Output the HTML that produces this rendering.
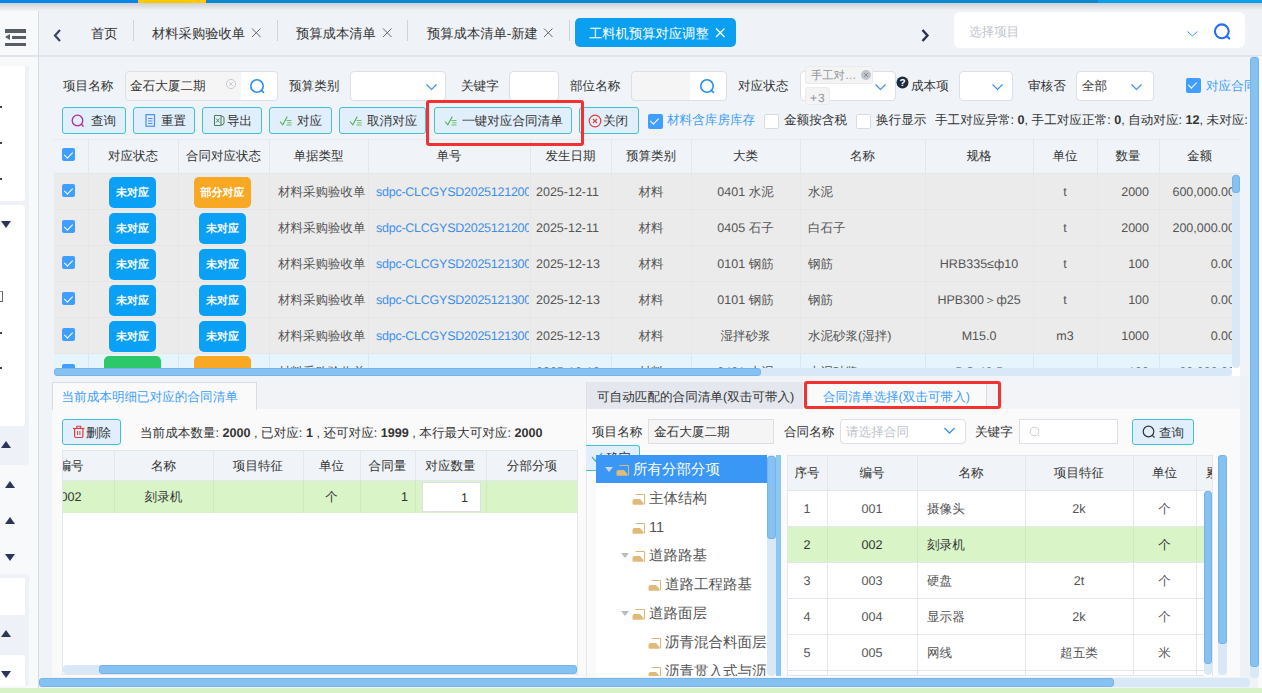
<!DOCTYPE html>
<html><head><meta charset="utf-8">
<style>
*{box-sizing:border-box;margin:0;padding:0}
html,body{width:1262px;height:693px;overflow:hidden;background:#f0f3f8;font-family:"Liberation Sans",sans-serif;font-size:13px;color:#333;text-rendering:geometricPrecision}
.a{position:absolute}
.t{position:absolute;white-space:nowrap;line-height:1}
.sb{position:absolute;background:#86c2f1;border-radius:3px;border:1px solid #76b4e8}
.tr{position:absolute;background:#d9e8f6;border-radius:4px}
.btn{position:absolute;height:27px;top:107px;background:#e1effc;border:1px solid #41c1d3;border-radius:3px;color:#333;white-space:nowrap}
.btn span{position:absolute;top:6px;line-height:1}
.inp{position:absolute;background:#fff;border:1px solid #dcdfe6;border-radius:4px}
.cb{position:absolute;width:15px;height:15px;border-radius:2px;background:#409eff}
.cb:after{content:"";position:absolute;left:4.3px;top:2px;width:3.8px;height:7px;border:solid #fff;border-width:0 1.5px 1.5px 0;transform:rotate(45deg)}
.cbo{position:absolute;width:15px;height:15px;border-radius:2px;background:#fff;border:1px solid #d8dbe0}
.badge{position:absolute;height:31px;border-radius:5px;color:#fff;font-weight:bold;text-align:center}
.badge span{position:absolute;left:0;right:0;top:11px;line-height:1}
.blue{background:#0aa0f5}
.orange{background:#f8a823}
.green{background:#2dc86a}
.vl{position:absolute;width:1px;background:#e3e6ea}
.hl{position:absolute;height:1px;background:#e3e6ea}
</style></head><body>
<div class="a" style="left:0px;top:0px;width:1262px;height:3px;background:#0a88d2"></div>
<div class="a" style="left:0px;top:0px;width:138px;height:3px;background:#0685e8"></div>
<div class="a" style="left:138px;top:0px;width:68px;height:3px;background:#ffc800"></div>
<div class="a" style="left:1098px;top:0px;width:164px;height:3px;background:#0aa0ea"></div>
<div class="a" style="left:0px;top:3px;width:1262px;height:8px;background:linear-gradient(#cfd0d3,#f3f4f6)"></div>
<div class="a" style="left:0px;top:11px;width:1262px;height:44px;background:#eff2f7"></div>
<div class="a" style="left:0px;top:11px;width:38px;height:677px;background:#f8f9fb"></div>
<div class="a" style="left:0px;top:55px;width:1262px;height:2px;background:#e1e5eb"></div>
<div class="a" style="left:38px;top:11px;width:1px;height:677px;background:#d8dce2"></div>
<div class="a" style="left:0px;top:66px;width:29px;height:399px;background:#eef2f8;border-radius:0 0 4px 0"></div>
<div class="a" style="left:0px;top:66px;width:25px;height:135px;background:#fff;border-radius:0 0 4px 0"></div>
<div class="a" style="left:0px;top:205px;width:25px;height:221px;background:#fff;border-radius:0 4px 4px 0"></div>
<div class="a" style="left:1px;top:221px;width:0px;height:0px;border-left:5.5px solid transparent;border-right:5.5px solid transparent;border-top:7px solid #2c3458"></div>
<div class="a" style="left:1px;top:441px;width:0px;height:0px;border-left:5.5px solid transparent;border-right:5.5px solid transparent;border-bottom:7px solid #2c3458"></div>
<div class="a" style="left:5px;top:481px;width:0px;height:0px;border-left:5.5px solid transparent;border-right:5.5px solid transparent;border-bottom:7px solid #2c3458"></div>
<div class="a" style="left:5px;top:517px;width:0px;height:0px;border-left:5.5px solid transparent;border-right:5.5px solid transparent;border-bottom:7px solid #2c3458"></div>
<div class="a" style="left:5px;top:554px;width:0px;height:0px;border-left:5.5px solid transparent;border-right:5.5px solid transparent;border-top:7px solid #2c3458"></div>
<div class="a" style="left:0px;top:574px;width:29px;height:112px;background:#eef2f8;border-radius:0 4px 4px 0"></div>
<div class="a" style="left:0px;top:578px;width:25px;height:37px;background:#fff"></div>
<div class="a" style="left:1px;top:630px;width:0px;height:0px;border-left:5.5px solid transparent;border-right:5.5px solid transparent;border-bottom:7px solid #2c3458"></div>
<div class="a" style="left:0px;top:655px;width:25px;height:31px;background:#fff;border-radius:0 4px 0 0"></div>
<div class="a" style="left:1px;top:671px;width:0px;height:0px;border-left:5.5px solid transparent;border-right:5.5px solid transparent;border-top:7px solid #2c3458"></div>
<div class="a" style="left:0px;top:106px;width:2px;height:2px;background:#444"></div>
<div class="a" style="left:0px;top:142px;width:2px;height:2px;background:#444"></div>
<div class="a" style="left:0px;top:178px;width:2px;height:2px;background:#444"></div>
<div class="a" style="left:0px;top:332px;width:2px;height:2px;background:#444"></div>
<div class="a" style="left:0px;top:367px;width:2px;height:2px;background:#444"></div>
<div class="a" style="left:0px;top:291px;width:3px;height:11px;border-right:1px solid #666;border-top:1px solid #888;border-bottom:1px solid #666"></div>
<div class="a" style="left:5px;top:29.3px;width:21px;height:3.4px;background:#595d64"></div>
<div class="a" style="left:12px;top:36px;width:14px;height:3.4px;background:#595d64"></div>
<div class="a" style="left:5px;top:43px;width:21px;height:3.4px;background:#595d64"></div>
<div class="a" style="left:5px;top:34px;width:0px;height:0px;border-top:3.5px solid transparent;border-bottom:3.5px solid transparent;border-right:5px solid #595d64"></div>
<svg class="a" style="left:50px;top:27px" width="14" height="16"><path d="M10 3 L5 8.5 L10 14" fill="none" stroke="#3a4468" stroke-width="2.2"/></svg>
<svg class="a" style="left:918px;top:27px" width="14" height="16"><path d="M4.5 3 L9.5 8.5 L4.5 14" fill="none" stroke="#2a3050" stroke-width="2.4"/></svg>
<div class="t" style="left:91px;top:27px;font-size:13.3px;color:#333;">首页</div>
<div class="a" style="left:133px;top:20px;width:1px;height:21px;background:#cfd3d9"></div>
<div class="t" style="left:152px;top:27px;font-size:13.3px;color:#333;">材料采购验收单</div>
<svg class="a" style="left:251px;top:27px" width="11" height="11"><path d="M1 1.5 L9.5 10 M9.5 1.5 L1 10" stroke="#666" stroke-width="1"/></svg>
<div class="a" style="left:277px;top:20px;width:1px;height:21px;background:#cfd3d9"></div>
<div class="t" style="left:296px;top:27px;font-size:13.3px;color:#333;">预算成本清单</div>
<svg class="a" style="left:382px;top:27px" width="11" height="11"><path d="M1 1.5 L9.5 10 M9.5 1.5 L1 10" stroke="#666" stroke-width="1"/></svg>
<div class="a" style="left:407px;top:20px;width:1px;height:21px;background:#cfd3d9"></div>
<div class="t" style="left:427px;top:27px;font-size:13.3px;color:#333;">预算成本清单-新建</div>
<svg class="a" style="left:543px;top:27px" width="11" height="11"><path d="M1 1.5 L9.5 10 M9.5 1.5 L1 10" stroke="#666" stroke-width="1"/></svg>
<div class="a" style="left:569px;top:20px;width:1px;height:21px;background:#cfd3d9"></div>
<div class="a" style="left:575px;top:18px;width:161px;height:29px;background:#0a9ff0;border-radius:5px"></div>
<div class="t" style="left:589px;top:27px;font-size:13.3px;color:#fff;">工料机预算对应调整</div>
<svg class="a" style="left:715px;top:27px" width="11" height="11"><path d="M1 1.5 L9.5 10 M9.5 1.5 L1 10" stroke="#fff" stroke-width="1.4"/></svg>
<div class="a" style="left:954px;top:12px;width:291px;height:36px;background:#fff;border-radius:6px"></div>
<div class="t" style="left:969px;top:26px;font-size:12.6px;color:#c0c4cc;">选择项目</div>
<svg class="a" style="left:1186px;top:28.5px" width="14" height="10"><path d="M1.5 2.5 L6.5 7 L11.5 2.5" fill="none" stroke="#3a9af5" stroke-width="1"/></svg>
<svg class="a" style="left:1212px;top:23px" width="22" height="20"><circle cx="9.8" cy="8.3" r="6.9" fill="none" stroke="#2a6cf2" stroke-width="2.1"/><path d="M14.6 13.1 L17.3 15.6" stroke="#2a6cf2" stroke-width="2.1" stroke-linecap="round"/></svg>
<div class="t" style="left:63px;top:79.7px;font-size:12.6px;color:#333;">项目名称</div>
<div class="a" style="left:125px;top:71px;width:153px;height:30px;background:#f5f5f5;border:1px solid #dcdfe6;border-radius:4px"></div>
<div class="a" style="left:241px;top:72px;width:36px;height:28px;background:#fff;border-radius:0 4px 4px 0"></div>
<div class="t" style="left:130px;top:79.7px;font-size:12.6px;color:#333;">金石大厦二期</div>
<svg class="a" style="left:225px;top:78px" width="12" height="12"><circle cx="6" cy="6" r="4.6" fill="none" stroke="#c8cbd0" stroke-width="1"/><path d="M4.2 4.2 L7.8 7.8 M7.8 4.2 L4.2 7.8" stroke="#c8cbd0" stroke-width="1"/></svg>
<svg class="a" style="left:249px;top:78px" width="18" height="18"><circle cx="8" cy="8" r="6.2" fill="none" stroke="#2b8ef0" stroke-width="1.6"/><path d="M12.3 12.3 L15 15" stroke="#2b8ef0" stroke-width="1.6"/></svg>
<div class="t" style="left:289px;top:79.7px;font-size:12.6px;color:#333;">预算类别</div>
<div class="a" style="left:350px;top:71px;width:96px;height:30px;background:#fff;border:1px solid #dcdfe6;border-radius:4px"></div>
<svg class="a" style="left:425px;top:82px" width="14" height="10"><path d="M1.5 2.5 L6.5 7.5 L11.5 2.5" fill="none" stroke="#3d8ef0" stroke-width="1.1"/></svg>
<div class="t" style="left:461px;top:79.7px;font-size:12.6px;color:#333;">关键字</div>
<div class="a" style="left:509px;top:71px;width:50px;height:30px;background:#fff;border:1px solid #dcdfe6;border-radius:4px"></div>
<div class="t" style="left:570px;top:79.7px;font-size:12.6px;color:#333;">部位名称</div>
<div class="a" style="left:631px;top:71px;width:96px;height:30px;background:#f5f5f5;border:1px solid #dcdfe6;border-radius:4px"></div>
<div class="a" style="left:690px;top:72px;width:36px;height:28px;background:#fff;border-radius:0 4px 4px 0"></div>
<svg class="a" style="left:699px;top:78px" width="18" height="18"><circle cx="8" cy="8" r="6.2" fill="none" stroke="#2b8ef0" stroke-width="1.6"/><path d="M12.3 12.3 L15 15" stroke="#2b8ef0" stroke-width="1.6"/></svg>
<div class="t" style="left:738px;top:79.7px;font-size:12.6px;color:#333;">对应状态</div>
<div class="a" style="left:800px;top:71px;width:96px;height:30px;background:#fff;border:1px solid #dcdfe6;border-radius:4px"></div>
<div class="a" style="left:805px;top:66px;width:68px;height:18px;background:#f4f4f5;border:1px solid #ebebeb;border-radius:3px"></div>
<div class="t" style="left:811px;top:70.5px;font-size:11.3px;color:#909399;">手工对…</div>
<svg class="a" style="left:860px;top:69px" width="12" height="12"><circle cx="6" cy="6" r="5" fill="#c0c4cc"/><path d="M4 4 L8 8 M8 4 L4 8" stroke="#8a8d93" stroke-width="1"/></svg>
<div class="a" style="left:805px;top:87px;width:25px;height:18px;background:#f4f4f5;border:1px solid #ebebeb;border-radius:3px"></div>
<div class="t" style="left:810px;top:91.5px;font-size:12px;color:#909399;">+&#8202;3</div>
<svg class="a" style="left:874px;top:82px" width="14" height="10"><path d="M1.5 2.5 L6.5 7.5 L11.5 2.5" fill="none" stroke="#3d8ef0" stroke-width="1.1"/></svg>
<svg class="a" style="left:896px;top:76px" width="13" height="13"><circle cx="6.5" cy="6.5" r="6" fill="#1d2b3a"/><text x="6.5" y="10.3" font-size="10" font-weight="bold" fill="#fff" text-anchor="middle" font-family="Liberation Sans">?</text></svg>
<div class="t" style="left:911px;top:79.7px;font-size:12.6px;color:#333;">成本项</div>
<div class="a" style="left:959px;top:71px;width:54px;height:30px;background:#fff;border:1px solid #dcdfe6;border-radius:4px"></div>
<svg class="a" style="left:991px;top:82px" width="14" height="10"><path d="M1.5 2.5 L6.5 7.5 L11.5 2.5" fill="none" stroke="#3d8ef0" stroke-width="1.1"/></svg>
<div class="t" style="left:1028px;top:79.7px;font-size:12.6px;color:#333;">审核否</div>
<div class="a" style="left:1076px;top:71px;width:78px;height:30px;background:#fff;border:1px solid #dcdfe6;border-radius:4px"></div>
<div class="t" style="left:1082px;top:79.7px;font-size:12.6px;color:#333;">全部</div>
<svg class="a" style="left:1130px;top:82px" width="14" height="10"><path d="M1.5 2.5 L6.5 7.5 L11.5 2.5" fill="none" stroke="#3d8ef0" stroke-width="1.1"/></svg>
<div class="cb" style="left:1186px;top:78px"></div>
<div class="t" style="left:1206px;top:79.7px;font-size:12.6px;color:#409eff;">对应合同</div>
<div class="btn" style="left:62px;top:107px;width:64px;height:27px"><svg style="position:absolute;left:8px;top:6px" width="14" height="15"><circle cx="6.5" cy="6.5" r="5.3" fill="none" stroke="#b02a9a" stroke-width="1.3"/><path d="M10.3 10.3 L12.5 12.5" stroke="#b02a9a" stroke-width="1.3"/></svg><span style="left:28px;font-size:12.6px;top:6.7px">查询</span></div>
<div class="btn" style="left:133px;top:107px;width:62px;height:27px"><svg style="position:absolute;left:11px;top:6px" width="12" height="14"><rect x="1" y="0.7" width="8.5" height="11.5" fill="none" stroke="#4a8ef0" stroke-width="1.2"/><path d="M3 4.5 H7.5 M3 7 H7.5 M3 9.5 H7.5" stroke="#4a8ef0" stroke-width="1"/></svg><span style="left:27px;font-size:12.6px;top:6.7px">重置</span></div>
<div class="btn" style="left:202px;top:107px;width:60px;height:27px"><svg style="position:absolute;left:10px;top:6px" width="13" height="14"><path d="M1.5 1.5 H8 V11.5 H1.5 Z" fill="none" stroke="#4a7f50" stroke-width="1"/><path d="M8 2 Q11 2 11 4 V9 Q11 11 8 11" fill="none" stroke="#4a7f50" stroke-width="1"/><path d="M3 4.5 L6.5 8.5 M6.5 4.5 L3 8.5" stroke="#4a7f50" stroke-width="0.9"/></svg><span style="left:24px;font-size:12.6px;top:6.7px">导出</span></div>
<div class="btn" style="left:269px;top:107px;width:63px;height:27px"><svg style="position:absolute;left:9px;top:7px" width="15" height="12"><path d="M1 6.5 L3.8 9.8 L8.3 1.5" fill="none" stroke="#4fb04a" stroke-width="1.1"/><path d="M7.5 5.5 H12.5 M8.3 7.8 H12.5 M7.5 10 H12.5" stroke="#62b85a" stroke-width="0.9"/></svg><span style="left:27px;font-size:12.6px;top:6.7px">对应</span></div>
<div class="btn" style="left:339px;top:107px;width:87px;height:27px"><svg style="position:absolute;left:9px;top:7px" width="15" height="12"><path d="M1 6.5 L3.8 9.8 L8.3 1.5" fill="none" stroke="#4fb04a" stroke-width="1.1"/><path d="M7.5 5.5 H12.5 M8.3 7.8 H12.5 M7.5 10 H12.5" stroke="#62b85a" stroke-width="0.9"/></svg><span style="left:27px;font-size:12.6px;top:6.7px">取消对应</span></div>
<div class="btn" style="left:434px;top:107px;width:138px;height:27px"><svg style="position:absolute;left:9px;top:7px" width="15" height="12"><path d="M1 6.5 L3.8 9.8 L8.3 1.5" fill="none" stroke="#4fb04a" stroke-width="1.1"/><path d="M7.5 5.5 H12.5 M8.3 7.8 H12.5 M7.5 10 H12.5" stroke="#62b85a" stroke-width="0.9"/></svg><span style="left:27px;font-size:12.6px;top:6.7px">一键对应合同清单</span></div>
<div class="btn" style="left:579px;top:107px;width:60px;height:27px"><svg style="position:absolute;left:8px;top:6px" width="14" height="14"><circle cx="7" cy="7" r="5.8" fill="none" stroke="#e23c3c" stroke-width="1.2"/><path d="M5 5 L9 9 M9 5 L5 9" stroke="#e23c3c" stroke-width="1.1"/></svg><span style="left:23px;font-size:12.6px;top:6.7px">关闭</span></div>
<div class="cb" style="left:648px;top:114px"></div>
<div class="t" style="left:667px;top:114.3px;font-size:12.6px;color:#409eff;">材料含库房库存</div>
<div class="cbo" style="left:764px;top:114px"></div>
<div class="t" style="left:784px;top:114.3px;font-size:12.6px;color:#333;">金额按含税</div>
<div class="cbo" style="left:856px;top:114px"></div>
<div class="t" style="left:876px;top:114.3px;font-size:12.6px;color:#333;">换行显示</div>
<div class="t" style="left:935px;top:114.3px;font-size:12.6px;color:#333;width:314px;overflow:hidden">手工对应异常: <b>0</b>, 手工对应正常: <b>0</b>, 自动对应: <b>12</b>, 未对应: <b>9</b></div>
<div class="a" style="left:54px;top:139px;width:1186px;height:229px;background:#fff;border-top:1px solid #e6e9ee;overflow:hidden">
<div class="a" style="left:0px;top:0px;width:1186px;height:34px;background:#f0f3f8;border-bottom:1px solid #e3e6ea"></div>
<div class="a" style="left:34px;top:0px;width:1px;height:34px;background:#e3e6ea"></div>
<div class="a" style="left:124px;top:0px;width:1px;height:34px;background:#e3e6ea"></div>
<div class="a" style="left:215px;top:0px;width:1px;height:34px;background:#e3e6ea"></div>
<div class="a" style="left:314px;top:0px;width:1px;height:34px;background:#e3e6ea"></div>
<div class="a" style="left:476px;top:0px;width:1px;height:34px;background:#e3e6ea"></div>
<div class="a" style="left:557px;top:0px;width:1px;height:34px;background:#e3e6ea"></div>
<div class="a" style="left:637px;top:0px;width:1px;height:34px;background:#e3e6ea"></div>
<div class="a" style="left:746px;top:0px;width:1px;height:34px;background:#e3e6ea"></div>
<div class="a" style="left:871px;top:0px;width:1px;height:34px;background:#e3e6ea"></div>
<div class="a" style="left:979px;top:0px;width:1px;height:34px;background:#e3e6ea"></div>
<div class="a" style="left:1043px;top:0px;width:1px;height:34px;background:#e3e6ea"></div>
<div class="a" style="left:1105px;top:0px;width:1px;height:34px;background:#e3e6ea"></div>
<div class="cb" style="left:8px;top:8px;width:13px;height:13px"></div>
<div class="t" style="left:34px;width:90px;top:10.3px;text-align:center;font-size:12.5px;color:#333;">对应状态</div>
<div class="t" style="left:124px;width:91px;top:10.3px;text-align:center;font-size:12.5px;color:#333;">合同对应状态</div>
<div class="t" style="left:215px;width:99px;top:10.3px;text-align:center;font-size:12.5px;color:#333;">单据类型</div>
<div class="t" style="left:314px;width:162px;top:10.3px;text-align:center;font-size:12.5px;color:#333;">单号</div>
<div class="t" style="left:476px;width:81px;top:10.3px;text-align:center;font-size:12.5px;color:#333;">发生日期</div>
<div class="t" style="left:557px;width:80px;top:10.3px;text-align:center;font-size:12.5px;color:#333;">预算类别</div>
<div class="t" style="left:637px;width:109px;top:10.3px;text-align:center;font-size:12.5px;color:#333;">大类</div>
<div class="t" style="left:746px;width:125px;top:10.3px;text-align:center;font-size:12.5px;color:#333;">名称</div>
<div class="t" style="left:871px;width:108px;top:10.3px;text-align:center;font-size:12.5px;color:#333;">规格</div>
<div class="t" style="left:979px;width:64px;top:10.3px;text-align:center;font-size:12.5px;color:#333;">单位</div>
<div class="t" style="left:1043px;width:62px;top:10.3px;text-align:center;font-size:12.5px;color:#333;">数量</div>
<div class="t" style="left:1105px;width:81px;top:10.3px;text-align:center;font-size:12.5px;color:#333;">金额</div>
<div class="a" style="left:0px;top:34px;width:1186px;height:36px;background:#ebebeb"></div>
<div class="a" style="left:0px;top:69px;width:1186px;height:1px;background:#e6e6e6"></div>
<div class="a" style="left:34px;top:34px;width:1px;height:36px;background:#e7e7e7"></div>
<div class="a" style="left:124px;top:34px;width:1px;height:36px;background:#e7e7e7"></div>
<div class="a" style="left:215px;top:34px;width:1px;height:36px;background:#e7e7e7"></div>
<div class="a" style="left:314px;top:34px;width:1px;height:36px;background:#e7e7e7"></div>
<div class="a" style="left:476px;top:34px;width:1px;height:36px;background:#e7e7e7"></div>
<div class="a" style="left:557px;top:34px;width:1px;height:36px;background:#e7e7e7"></div>
<div class="a" style="left:637px;top:34px;width:1px;height:36px;background:#e7e7e7"></div>
<div class="a" style="left:746px;top:34px;width:1px;height:36px;background:#e7e7e7"></div>
<div class="a" style="left:871px;top:34px;width:1px;height:36px;background:#e7e7e7"></div>
<div class="a" style="left:979px;top:34px;width:1px;height:36px;background:#e7e7e7"></div>
<div class="a" style="left:1043px;top:34px;width:1px;height:36px;background:#e7e7e7"></div>
<div class="a" style="left:1105px;top:34px;width:1px;height:36px;background:#e7e7e7"></div>
<div class="cb" style="left:8px;top:44px;width:13px;height:13px"></div>
<div class="badge blue" style="left:55px;top:37px;width:47px"><span style="font-size:11px">未对应</span></div>
<div class="badge orange" style="left:140px;top:37px;width:57px"><span style="font-size:11px">部分对应</span></div>
<div class="t" style="left:224px;top:46.3px;font-size:12.5px;color:#555;">材料采购验收单</div>
<div class="t" style="left:322px;top:46.3px;font-size:12.5px;color:#3f8ee8;width:153px;overflow:hidden;letter-spacing:-0.25px">sdpc-CLCGYSD2025121200</div>
<div class="t" style="left:482px;top:46.3px;font-size:12.5px;color:#555;">2025-12-11</div>
<div class="t" style="left:557px;width:80px;top:46.3px;text-align:center;font-size:12.5px;color:#555;">材料</div>
<div class="t" style="left:637px;width:109px;top:46.3px;text-align:center;font-size:12.5px;color:#555;">0401 水泥</div>
<div class="t" style="left:754px;top:46.3px;font-size:12.5px;color:#555;">水泥</div>
<div class="t" style="left:871px;width:108px;top:46.3px;text-align:center;font-size:12.5px;color:#555;"></div>
<div class="t" style="left:979px;width:64px;top:46.3px;text-align:center;font-size:12.5px;color:#555;">t</div>
<div class="t" style="left:1043px;width:52px;top:46.3px;text-align:right;font-size:12.5px;color:#555;">2000</div>
<div class="t" style="left:1101px;width:80px;top:46.3px;text-align:right;font-size:12.5px;color:#555;">600,000.00</div>
<div class="a" style="left:0px;top:70px;width:1186px;height:36px;background:#ebebeb"></div>
<div class="a" style="left:0px;top:105px;width:1186px;height:1px;background:#e6e6e6"></div>
<div class="a" style="left:34px;top:70px;width:1px;height:36px;background:#e7e7e7"></div>
<div class="a" style="left:124px;top:70px;width:1px;height:36px;background:#e7e7e7"></div>
<div class="a" style="left:215px;top:70px;width:1px;height:36px;background:#e7e7e7"></div>
<div class="a" style="left:314px;top:70px;width:1px;height:36px;background:#e7e7e7"></div>
<div class="a" style="left:476px;top:70px;width:1px;height:36px;background:#e7e7e7"></div>
<div class="a" style="left:557px;top:70px;width:1px;height:36px;background:#e7e7e7"></div>
<div class="a" style="left:637px;top:70px;width:1px;height:36px;background:#e7e7e7"></div>
<div class="a" style="left:746px;top:70px;width:1px;height:36px;background:#e7e7e7"></div>
<div class="a" style="left:871px;top:70px;width:1px;height:36px;background:#e7e7e7"></div>
<div class="a" style="left:979px;top:70px;width:1px;height:36px;background:#e7e7e7"></div>
<div class="a" style="left:1043px;top:70px;width:1px;height:36px;background:#e7e7e7"></div>
<div class="a" style="left:1105px;top:70px;width:1px;height:36px;background:#e7e7e7"></div>
<div class="cb" style="left:8px;top:80px;width:13px;height:13px"></div>
<div class="badge blue" style="left:55px;top:73px;width:47px"><span style="font-size:11px">未对应</span></div>
<div class="badge blue" style="left:145px;top:73px;width:47px"><span style="font-size:11px">未对应</span></div>
<div class="t" style="left:224px;top:82.3px;font-size:12.5px;color:#555;">材料采购验收单</div>
<div class="t" style="left:322px;top:82.3px;font-size:12.5px;color:#3f8ee8;width:153px;overflow:hidden;letter-spacing:-0.25px">sdpc-CLCGYSD2025121200</div>
<div class="t" style="left:482px;top:82.3px;font-size:12.5px;color:#555;">2025-12-11</div>
<div class="t" style="left:557px;width:80px;top:82.3px;text-align:center;font-size:12.5px;color:#555;">材料</div>
<div class="t" style="left:637px;width:109px;top:82.3px;text-align:center;font-size:12.5px;color:#555;">0405 石子</div>
<div class="t" style="left:754px;top:82.3px;font-size:12.5px;color:#555;">白石子</div>
<div class="t" style="left:871px;width:108px;top:82.3px;text-align:center;font-size:12.5px;color:#555;"></div>
<div class="t" style="left:979px;width:64px;top:82.3px;text-align:center;font-size:12.5px;color:#555;">t</div>
<div class="t" style="left:1043px;width:52px;top:82.3px;text-align:right;font-size:12.5px;color:#555;">2000</div>
<div class="t" style="left:1101px;width:80px;top:82.3px;text-align:right;font-size:12.5px;color:#555;">200,000.00</div>
<div class="a" style="left:0px;top:106px;width:1186px;height:36px;background:#ebebeb"></div>
<div class="a" style="left:0px;top:141px;width:1186px;height:1px;background:#e6e6e6"></div>
<div class="a" style="left:34px;top:106px;width:1px;height:36px;background:#e7e7e7"></div>
<div class="a" style="left:124px;top:106px;width:1px;height:36px;background:#e7e7e7"></div>
<div class="a" style="left:215px;top:106px;width:1px;height:36px;background:#e7e7e7"></div>
<div class="a" style="left:314px;top:106px;width:1px;height:36px;background:#e7e7e7"></div>
<div class="a" style="left:476px;top:106px;width:1px;height:36px;background:#e7e7e7"></div>
<div class="a" style="left:557px;top:106px;width:1px;height:36px;background:#e7e7e7"></div>
<div class="a" style="left:637px;top:106px;width:1px;height:36px;background:#e7e7e7"></div>
<div class="a" style="left:746px;top:106px;width:1px;height:36px;background:#e7e7e7"></div>
<div class="a" style="left:871px;top:106px;width:1px;height:36px;background:#e7e7e7"></div>
<div class="a" style="left:979px;top:106px;width:1px;height:36px;background:#e7e7e7"></div>
<div class="a" style="left:1043px;top:106px;width:1px;height:36px;background:#e7e7e7"></div>
<div class="a" style="left:1105px;top:106px;width:1px;height:36px;background:#e7e7e7"></div>
<div class="cb" style="left:8px;top:116px;width:13px;height:13px"></div>
<div class="badge blue" style="left:55px;top:109px;width:47px"><span style="font-size:11px">未对应</span></div>
<div class="badge blue" style="left:145px;top:109px;width:47px"><span style="font-size:11px">未对应</span></div>
<div class="t" style="left:224px;top:118.3px;font-size:12.5px;color:#555;">材料采购验收单</div>
<div class="t" style="left:322px;top:118.3px;font-size:12.5px;color:#3f8ee8;width:153px;overflow:hidden;letter-spacing:-0.25px">sdpc-CLCGYSD2025121300</div>
<div class="t" style="left:482px;top:118.3px;font-size:12.5px;color:#555;">2025-12-13</div>
<div class="t" style="left:557px;width:80px;top:118.3px;text-align:center;font-size:12.5px;color:#555;">材料</div>
<div class="t" style="left:637px;width:109px;top:118.3px;text-align:center;font-size:12.5px;color:#555;">0101 钢筋</div>
<div class="t" style="left:754px;top:118.3px;font-size:12.5px;color:#555;">钢筋</div>
<div class="t" style="left:871px;width:108px;top:118.3px;text-align:center;font-size:12.5px;color:#555;">HRB335≤ф10</div>
<div class="t" style="left:979px;width:64px;top:118.3px;text-align:center;font-size:12.5px;color:#555;">t</div>
<div class="t" style="left:1043px;width:52px;top:118.3px;text-align:right;font-size:12.5px;color:#555;">100</div>
<div class="t" style="left:1101px;width:80px;top:118.3px;text-align:right;font-size:12.5px;color:#555;">0.00</div>
<div class="a" style="left:0px;top:142px;width:1186px;height:36px;background:#ebebeb"></div>
<div class="a" style="left:0px;top:177px;width:1186px;height:1px;background:#e6e6e6"></div>
<div class="a" style="left:34px;top:142px;width:1px;height:36px;background:#e7e7e7"></div>
<div class="a" style="left:124px;top:142px;width:1px;height:36px;background:#e7e7e7"></div>
<div class="a" style="left:215px;top:142px;width:1px;height:36px;background:#e7e7e7"></div>
<div class="a" style="left:314px;top:142px;width:1px;height:36px;background:#e7e7e7"></div>
<div class="a" style="left:476px;top:142px;width:1px;height:36px;background:#e7e7e7"></div>
<div class="a" style="left:557px;top:142px;width:1px;height:36px;background:#e7e7e7"></div>
<div class="a" style="left:637px;top:142px;width:1px;height:36px;background:#e7e7e7"></div>
<div class="a" style="left:746px;top:142px;width:1px;height:36px;background:#e7e7e7"></div>
<div class="a" style="left:871px;top:142px;width:1px;height:36px;background:#e7e7e7"></div>
<div class="a" style="left:979px;top:142px;width:1px;height:36px;background:#e7e7e7"></div>
<div class="a" style="left:1043px;top:142px;width:1px;height:36px;background:#e7e7e7"></div>
<div class="a" style="left:1105px;top:142px;width:1px;height:36px;background:#e7e7e7"></div>
<div class="cb" style="left:8px;top:152px;width:13px;height:13px"></div>
<div class="badge blue" style="left:55px;top:145px;width:47px"><span style="font-size:11px">未对应</span></div>
<div class="badge blue" style="left:145px;top:145px;width:47px"><span style="font-size:11px">未对应</span></div>
<div class="t" style="left:224px;top:154.3px;font-size:12.5px;color:#555;">材料采购验收单</div>
<div class="t" style="left:322px;top:154.3px;font-size:12.5px;color:#3f8ee8;width:153px;overflow:hidden;letter-spacing:-0.25px">sdpc-CLCGYSD2025121300</div>
<div class="t" style="left:482px;top:154.3px;font-size:12.5px;color:#555;">2025-12-13</div>
<div class="t" style="left:557px;width:80px;top:154.3px;text-align:center;font-size:12.5px;color:#555;">材料</div>
<div class="t" style="left:637px;width:109px;top:154.3px;text-align:center;font-size:12.5px;color:#555;">0101 钢筋</div>
<div class="t" style="left:754px;top:154.3px;font-size:12.5px;color:#555;">钢筋</div>
<div class="t" style="left:871px;width:108px;top:154.3px;text-align:center;font-size:12.5px;color:#555;">HPB300＞ф25</div>
<div class="t" style="left:979px;width:64px;top:154.3px;text-align:center;font-size:12.5px;color:#555;">t</div>
<div class="t" style="left:1043px;width:52px;top:154.3px;text-align:right;font-size:12.5px;color:#555;">100</div>
<div class="t" style="left:1101px;width:80px;top:154.3px;text-align:right;font-size:12.5px;color:#555;">0.00</div>
<div class="a" style="left:0px;top:178px;width:1186px;height:36px;background:#ebebeb"></div>
<div class="a" style="left:0px;top:213px;width:1186px;height:1px;background:#e6e6e6"></div>
<div class="a" style="left:34px;top:178px;width:1px;height:36px;background:#e7e7e7"></div>
<div class="a" style="left:124px;top:178px;width:1px;height:36px;background:#e7e7e7"></div>
<div class="a" style="left:215px;top:178px;width:1px;height:36px;background:#e7e7e7"></div>
<div class="a" style="left:314px;top:178px;width:1px;height:36px;background:#e7e7e7"></div>
<div class="a" style="left:476px;top:178px;width:1px;height:36px;background:#e7e7e7"></div>
<div class="a" style="left:557px;top:178px;width:1px;height:36px;background:#e7e7e7"></div>
<div class="a" style="left:637px;top:178px;width:1px;height:36px;background:#e7e7e7"></div>
<div class="a" style="left:746px;top:178px;width:1px;height:36px;background:#e7e7e7"></div>
<div class="a" style="left:871px;top:178px;width:1px;height:36px;background:#e7e7e7"></div>
<div class="a" style="left:979px;top:178px;width:1px;height:36px;background:#e7e7e7"></div>
<div class="a" style="left:1043px;top:178px;width:1px;height:36px;background:#e7e7e7"></div>
<div class="a" style="left:1105px;top:178px;width:1px;height:36px;background:#e7e7e7"></div>
<div class="cb" style="left:8px;top:188px;width:13px;height:13px"></div>
<div class="badge blue" style="left:55px;top:181px;width:47px"><span style="font-size:11px">未对应</span></div>
<div class="badge blue" style="left:145px;top:181px;width:47px"><span style="font-size:11px">未对应</span></div>
<div class="t" style="left:224px;top:190.3px;font-size:12.5px;color:#555;">材料采购验收单</div>
<div class="t" style="left:322px;top:190.3px;font-size:12.5px;color:#3f8ee8;width:153px;overflow:hidden;letter-spacing:-0.25px">sdpc-CLCGYSD2025121300</div>
<div class="t" style="left:482px;top:190.3px;font-size:12.5px;color:#555;">2025-12-13</div>
<div class="t" style="left:557px;width:80px;top:190.3px;text-align:center;font-size:12.5px;color:#555;">材料</div>
<div class="t" style="left:637px;width:109px;top:190.3px;text-align:center;font-size:12.5px;color:#555;">湿拌砂浆</div>
<div class="t" style="left:754px;top:190.3px;font-size:12.5px;color:#555;">水泥砂浆(湿拌)</div>
<div class="t" style="left:871px;width:108px;top:190.3px;text-align:center;font-size:12.5px;color:#555;">M15.0</div>
<div class="t" style="left:979px;width:64px;top:190.3px;text-align:center;font-size:12.5px;color:#555;">m3</div>
<div class="t" style="left:1043px;width:52px;top:190.3px;text-align:right;font-size:12.5px;color:#555;">1000</div>
<div class="t" style="left:1101px;width:80px;top:190.3px;text-align:right;font-size:12.5px;color:#555;">0.00</div>
<div class="a" style="left:0px;top:214px;width:1186px;height:36px;background:#e6f5fd"></div>
<div class="a" style="left:34px;top:214px;width:1px;height:36px;background:#dde8ee"></div>
<div class="a" style="left:124px;top:214px;width:1px;height:36px;background:#dde8ee"></div>
<div class="a" style="left:215px;top:214px;width:1px;height:36px;background:#dde8ee"></div>
<div class="a" style="left:314px;top:214px;width:1px;height:36px;background:#dde8ee"></div>
<div class="a" style="left:476px;top:214px;width:1px;height:36px;background:#dde8ee"></div>
<div class="a" style="left:557px;top:214px;width:1px;height:36px;background:#dde8ee"></div>
<div class="a" style="left:637px;top:214px;width:1px;height:36px;background:#dde8ee"></div>
<div class="a" style="left:746px;top:214px;width:1px;height:36px;background:#dde8ee"></div>
<div class="a" style="left:871px;top:214px;width:1px;height:36px;background:#dde8ee"></div>
<div class="a" style="left:979px;top:214px;width:1px;height:36px;background:#dde8ee"></div>
<div class="a" style="left:1043px;top:214px;width:1px;height:36px;background:#dde8ee"></div>
<div class="a" style="left:1105px;top:214px;width:1px;height:36px;background:#dde8ee"></div>
<div class="cb" style="left:8px;top:224px;width:13px;height:13px"></div>
<div class="badge green" style="left:50px;top:216px;width:57px"><span style="font-size:11px"></span></div>
<div class="badge orange" style="left:140px;top:216px;width:57px"><span style="font-size:11px"></span></div>
<div class="t" style="left:224px;top:226.3px;font-size:12.5px;color:#555;">材料采购验收单</div>
<div class="t" style="left:482px;top:226.3px;font-size:12.5px;color:#555;">2025-12-13</div>
<div class="t" style="left:557px;width:80px;top:226.3px;text-align:center;font-size:12.5px;color:#555;">材料</div>
<div class="t" style="left:637px;width:109px;top:226.3px;text-align:center;font-size:12.5px;color:#555;">0401 水泥</div>
<div class="t" style="left:754px;top:226.3px;font-size:12.5px;color:#555;">水泥砂浆</div>
<div class="t" style="left:871px;width:108px;top:226.3px;text-align:center;font-size:12.5px;color:#555;">P.O 42.5</div>
<div class="t" style="left:979px;width:64px;top:226.3px;text-align:center;font-size:12.5px;color:#555;">t</div>
<div class="t" style="left:1043px;width:52px;top:226.3px;text-align:right;font-size:12.5px;color:#555;">100</div>
<div class="t" style="left:1101px;width:80px;top:226.3px;text-align:right;font-size:12.5px;color:#555;">30,000.00</div>
</div>
<div class="a" style="left:1232px;top:174px;width:8px;height:202px;background:#fff"></div>
<div class="tr" style="left:1232px;top:174px;width:8px;height:194px"></div>
<div class="sb" style="left:1232px;top:175px;width:8px;height:18px"></div>
<div class="tr" style="left:54px;top:368px;width:1178px;height:8px"></div>
<div class="sb" style="left:54px;top:368px;width:707px;height:8px"></div>
<div class="a" style="left:426px;top:100px;width:158px;height:46px;border:3px solid #f33131;border-radius:3px"></div>
<div class="a" style="left:52px;top:382px;width:534px;height:28px;background:#f1f3f7;border-bottom:1px solid #dadee4"></div>
<div class="a" style="left:52px;top:409px;width:534px;height:268px;background:#fafafa"></div>
<div class="a" style="left:52px;top:382px;width:205px;height:28px;background:#fafafa;border:1px solid #dadee4;border-bottom:none"></div>
<div class="t" style="left:61.5px;top:391px;font-size:12.6px;color:#409eff;">当前成本明细已对应的合同清单</div>
<div class="btn" style="left:62px;top:419px;width:59px;height:26px"><svg style="position:absolute;left:9px;top:5px" width="14" height="15"><path d="M1 3.5 H12.5" stroke="#e23c3c" stroke-width="1.2"/><path d="M4.8 3.5 V1.3 H8.7 V3.5" fill="none" stroke="#e23c3c" stroke-width="1.1"/><path d="M2.6 3.5 V11.3 Q2.6 12.5 3.8 12.5 H9.7 Q10.9 12.5 10.9 11.3 V3.5" fill="none" stroke="#e23c3c" stroke-width="1.2"/><path d="M5.6 6 V10 M7.9 6 V10" stroke="#e23c3c" stroke-width="1"/></svg><span style="left:23px;top:6.5px;font-size:12.6px">删除</span></div>
<div class="t" style="left:140px;top:426.5px;font-size:12.6px;color:#333;">当前成本数量: <b>2000</b> , 已对应: <b>1</b> , 还可对应: <b>1999</b> , 本行最大可对应: <b>2000</b></div>
<div class="a" style="left:62px;top:450px;width:516px;height:225px;background:#fff;border:1px solid #e3e6ea;overflow:hidden">
<div class="a" style="left:0px;top:0px;width:516px;height:30px;background:#f0f3f8;border-bottom:1px solid #e3e6ea"></div>
<div class="a" style="left:51px;top:0px;width:1px;height:30px;background:#e3e6ea"></div>
<div class="a" style="left:150px;top:0px;width:1px;height:30px;background:#e3e6ea"></div>
<div class="a" style="left:240px;top:0px;width:1px;height:30px;background:#e3e6ea"></div>
<div class="a" style="left:297px;top:0px;width:1px;height:30px;background:#e3e6ea"></div>
<div class="a" style="left:352px;top:0px;width:1px;height:30px;background:#e3e6ea"></div>
<div class="a" style="left:423px;top:0px;width:1px;height:30px;background:#e3e6ea"></div>
<div class="t" style="left:-24px;width:64px;top:9px;text-align:center;font-size:12.6px;color:#333;">编号</div>
<div class="t" style="left:51px;width:99px;top:9px;text-align:center;font-size:12.6px;color:#333;">名称</div>
<div class="t" style="left:150px;width:90px;top:9px;text-align:center;font-size:12.6px;color:#333;">项目特征</div>
<div class="t" style="left:240px;width:57px;top:9px;text-align:center;font-size:12.6px;color:#333;">单位</div>
<div class="t" style="left:297px;width:55px;top:9px;text-align:center;font-size:12.6px;color:#333;">合同量</div>
<div class="t" style="left:352px;width:71px;top:9px;text-align:center;font-size:12.6px;color:#333;">对应数量</div>
<div class="t" style="left:423px;width:92px;top:9px;text-align:center;font-size:12.6px;color:#333;">分部分项</div>
<div class="a" style="left:0px;top:30px;width:516px;height:32px;background:#d9f5c8"></div>
<div class="a" style="left:51px;top:30px;width:1px;height:32px;background:#cfe8c0"></div>
<div class="a" style="left:150px;top:30px;width:1px;height:32px;background:#cfe8c0"></div>
<div class="a" style="left:240px;top:30px;width:1px;height:32px;background:#cfe8c0"></div>
<div class="a" style="left:297px;top:30px;width:1px;height:32px;background:#cfe8c0"></div>
<div class="a" style="left:352px;top:30px;width:1px;height:32px;background:#cfe8c0"></div>
<div class="a" style="left:423px;top:30px;width:1px;height:32px;background:#cfe8c0"></div>
<div class="t" style="left:-24px;width:64px;top:40px;text-align:center;font-size:12.6px;color:#333;">002</div>
<div class="t" style="left:51px;width:99px;top:40px;text-align:center;font-size:12.6px;color:#333;">刻录机</div>
<div class="t" style="left:240px;width:57px;top:40px;text-align:center;font-size:12.6px;color:#333;">个</div>
<div class="t" style="left:297px;width:48px;top:40px;text-align:right;font-size:12.6px;color:#333;">1</div>
<div class="a" style="left:359px;top:31px;width:59px;height:30px;background:#fff;border:1px solid #dcdfe6"></div>
<div class="t" style="left:359px;width:46px;top:41px;text-align:right;font-size:12.6px;color:#333;">1</div>
</div>
<div class="tr" style="left:63px;top:665px;width:514px;height:9px"></div>
<div class="sb" style="left:99px;top:665px;width:478px;height:9px"></div>
<div class="a" style="left:586px;top:382px;width:654px;height:27px;background:#f3f4f7"></div>
<div class="a" style="left:586px;top:409px;width:654px;height:268px;background:#fafafa;border-left:1px solid #e6e8eb"></div>
<div class="a" style="left:586px;top:382px;width:217px;height:27px;background:#e4e8ee;border-left:1px solid #dde1e6"></div>
<div class="t" style="left:597px;top:390.5px;font-size:12.6px;color:#333;">可自动匹配的合同清单(双击可带入)</div>
<div class="a" style="left:803px;top:382px;width:184px;height:27px;background:#fafafa;border-right:1px solid #d9dde2"></div>
<div class="t" style="left:823px;top:390.5px;font-size:12.6px;color:#409eff;">合同清单选择(双击可带入)</div>
<div class="a" style="left:804px;top:381px;width:197px;height:28px;border:3px solid #f33131;border-radius:3px"></div>
<div class="t" style="left:592px;top:425.5px;font-size:12.6px;color:#333;">项目名称</div>
<div class="a" style="left:648px;top:419px;width:126px;height:25px;background:#f5f5f5;border:1px solid #dcdfe6"></div>
<div class="t" style="left:654px;top:425.5px;font-size:12.6px;color:#333;">金石大厦二期</div>
<div class="t" style="left:784px;top:425.5px;font-size:12.6px;color:#333;">合同名称</div>
<div class="a" style="left:840px;top:419px;width:126px;height:25px;background:#fff;border:1px solid #dcdfe6;border-radius:4px"></div>
<div class="t" style="left:846px;top:425.5px;font-size:12.6px;color:#c0c4cc;">请选择合同</div>
<svg class="a" style="left:943px;top:426px" width="14" height="10"><path d="M1.5 2 L6.5 7 L11.5 2" fill="none" stroke="#3d8ef0" stroke-width="1.3"/></svg>
<div class="t" style="left:975px;top:425.5px;font-size:12.6px;color:#333;">关键字</div>
<div class="a" style="left:1019px;top:419px;width:99px;height:25px;background:#fff;border:1px solid #dcdfe6"></div>
<svg class="a" style="left:1029px;top:426px" width="12" height="12"><circle cx="5.5" cy="5.5" r="4.3" fill="none" stroke="#c8ccd2" stroke-width="1"/><path d="M8.5 8.5 L10.5 10.5" stroke="#c8ccd2" stroke-width="1"/></svg>
<div class="btn" style="left:1132px;top:419px;width:62px;height:26px"><svg style="position:absolute;left:9px;top:5px" width="14" height="15"><circle cx="6.5" cy="6.5" r="5.3" fill="none" stroke="#333" stroke-width="1.2"/><path d="M10.3 10.3 L12.5 12.5" stroke="#333" stroke-width="1.2"/></svg><span style="left:26px;top:6.5px;font-size:12.6px">查询</span></div>
<div class="a" style="left:586px;top:445px;width:54px;height:26px;background:#e1effc;border:1px solid #41c1d3;border-left:none;border-radius:0 3px 3px 0"></div>
<div class="t" style="left:606px;top:451.5px;font-size:12.6px;color:#333;">确定</div>
<svg class="a" style="left:591px;top:452px" width="12" height="10"><path d="M1 5 L4.5 9 L11 1" fill="none" stroke="#3cb5b0" stroke-width="1.2"/></svg>
<div class="a" style="left:596px;top:455px;width:185px;height:221px;background:#fff;overflow:hidden">
<div class="a" style="left:0px;top:0px;width:171px;height:28px;background:#3a97f5"></div>
<div class="a" style="left:9px;top:12px;width:0px;height:0px;border-left:4px solid transparent;border-right:4px solid transparent;border-top:5px solid #c6d6e8"></div>
<svg class="a" style="left:19.5px;top:10px" width="14" height="12"><path d="M3.5 0.5 H12.5 V10.5" fill="none" stroke="#dcb878" stroke-width="1"/><path d="M0.5 7 Q0.5 5 2.5 5 H8 L11.5 9 V10.8 H1.5 Q0.5 10.8 0.5 9.5 Z" fill="#dfba7a"/></svg>
<div class="t" style="left:37px;top:8px;font-size:14.5px;color:#fff;">所有分部分项</div>
<svg class="a" style="left:35.5px;top:38.8px" width="14" height="12"><path d="M3.5 0.5 H12.5 V10.5" fill="none" stroke="#dcb878" stroke-width="1"/><path d="M0.5 7 Q0.5 5 2.5 5 H8 L11.5 9 V10.8 H1.5 Q0.5 10.8 0.5 9.5 Z" fill="#dfba7a"/></svg>
<div class="t" style="left:53px;top:36.8px;font-size:14.5px;color:#555;">主体结构</div>
<svg class="a" style="left:35.5px;top:67.6px" width="14" height="12"><path d="M3.5 0.5 H12.5 V10.5" fill="none" stroke="#dcb878" stroke-width="1"/><path d="M0.5 7 Q0.5 5 2.5 5 H8 L11.5 9 V10.8 H1.5 Q0.5 10.8 0.5 9.5 Z" fill="#dfba7a"/></svg>
<div class="t" style="left:53px;top:65.6px;font-size:14.5px;color:#555;">11</div>
<div class="a" style="left:25px;top:98.4px;width:0px;height:0px;border-left:4px solid transparent;border-right:4px solid transparent;border-top:5px solid #b5bcc4"></div>
<svg class="a" style="left:35.5px;top:96.4px" width="14" height="12"><path d="M3.5 0.5 H12.5 V10.5" fill="none" stroke="#dcb878" stroke-width="1"/><path d="M0.5 7 Q0.5 5 2.5 5 H8 L11.5 9 V10.8 H1.5 Q0.5 10.8 0.5 9.5 Z" fill="#dfba7a"/></svg>
<div class="t" style="left:53px;top:94.4px;font-size:14.5px;color:#555;">道路路基</div>
<svg class="a" style="left:51.5px;top:125.2px" width="14" height="12"><path d="M3.5 0.5 H12.5 V10.5" fill="none" stroke="#dcb878" stroke-width="1"/><path d="M0.5 7 Q0.5 5 2.5 5 H8 L11.5 9 V10.8 H1.5 Q0.5 10.8 0.5 9.5 Z" fill="#dfba7a"/></svg>
<div class="t" style="left:69px;top:123.2px;font-size:14.5px;color:#555;">道路工程路基</div>
<div class="a" style="left:25px;top:156px;width:0px;height:0px;border-left:4px solid transparent;border-right:4px solid transparent;border-top:5px solid #b5bcc4"></div>
<svg class="a" style="left:35.5px;top:154px" width="14" height="12"><path d="M3.5 0.5 H12.5 V10.5" fill="none" stroke="#dcb878" stroke-width="1"/><path d="M0.5 7 Q0.5 5 2.5 5 H8 L11.5 9 V10.8 H1.5 Q0.5 10.8 0.5 9.5 Z" fill="#dfba7a"/></svg>
<div class="t" style="left:53px;top:152px;font-size:14.5px;color:#555;">道路面层</div>
<svg class="a" style="left:51.5px;top:182.8px" width="14" height="12"><path d="M3.5 0.5 H12.5 V10.5" fill="none" stroke="#dcb878" stroke-width="1"/><path d="M0.5 7 Q0.5 5 2.5 5 H8 L11.5 9 V10.8 H1.5 Q0.5 10.8 0.5 9.5 Z" fill="#dfba7a"/></svg>
<div class="t" style="left:69px;top:180.8px;font-size:14.5px;color:#555;">沥青混合料面层</div>
<svg class="a" style="left:51.5px;top:211.6px" width="14" height="12"><path d="M3.5 0.5 H12.5 V10.5" fill="none" stroke="#dcb878" stroke-width="1"/><path d="M0.5 7 Q0.5 5 2.5 5 H8 L11.5 9 V10.8 H1.5 Q0.5 10.8 0.5 9.5 Z" fill="#dfba7a"/></svg>
<div class="t" style="left:69px;top:209.6px;font-size:14.5px;color:#555;">沥青贯入式与沥青表面处治面层</div>
<div class="a" style="left:171px;top:0px;width:14px;height:221px;background:#fff"></div>
<div class="a" style="left:180px;top:0px;width:5px;height:221px;background:#8cc6f2"></div>
<div class="tr" style="left:171px;top:0;width:9px;height:221px"></div>
<div class="sb" style="left:171px;top:1px;width:9px;height:83px"></div>
</div>
<div class="a" style="left:787px;top:455px;width:426px;height:221px;background:#fff;border:1px solid #e3e6ea;overflow:hidden">
<div class="a" style="left:0px;top:0px;width:426px;height:35px;background:#f0f3f8;border-bottom:1px solid #e3e6ea"></div>
<div class="a" style="left:39px;top:0px;width:1px;height:221px;background:#e3e6ea"></div>
<div class="a" style="left:129px;top:0px;width:1px;height:221px;background:#e3e6ea"></div>
<div class="a" style="left:237px;top:0px;width:1px;height:221px;background:#e3e6ea"></div>
<div class="a" style="left:345px;top:0px;width:1px;height:221px;background:#e3e6ea"></div>
<div class="a" style="left:408px;top:0px;width:1px;height:221px;background:#e3e6ea"></div>
<div class="t" style="left:-1px;width:40px;top:11px;text-align:center;font-size:12.6px;color:#333;">序号</div>
<div class="t" style="left:39px;width:90px;top:11px;text-align:center;font-size:12.6px;color:#333;">编号</div>
<div class="t" style="left:129px;width:108px;top:11px;text-align:center;font-size:12.6px;color:#333;">名称</div>
<div class="t" style="left:237px;width:108px;top:11px;text-align:center;font-size:12.6px;color:#333;">项目特征</div>
<div class="t" style="left:345px;width:63px;top:11px;text-align:center;font-size:12.6px;color:#333;">单位</div>
<div class="t" style="left:408px;width:44px;top:11px;text-align:center;font-size:12.6px;color:#333;">累计</div>
<div class="a" style="left:0px;top:70px;width:426px;height:1px;background:#e3e6ea"></div>
<div class="t" style="left:-1px;width:40px;top:47px;text-align:center;font-size:12.6px;color:#555;">1</div>
<div class="t" style="left:39px;width:90px;top:47px;text-align:center;font-size:12.6px;color:#555;">001</div>
<div class="t" style="left:139px;top:47px;font-size:12.6px;color:#555;">摄像头</div>
<div class="t" style="left:237px;width:108px;top:47px;text-align:center;font-size:12.6px;color:#555;">2k</div>
<div class="t" style="left:345px;width:63px;top:47px;text-align:center;font-size:12.6px;color:#555;">个</div>
<div class="a" style="left:0px;top:71px;width:426px;height:35px;background:#d9f5c8"></div>
<div class="a" style="left:39px;top:71px;width:1px;height:35px;background:#cfe8c0"></div>
<div class="a" style="left:129px;top:71px;width:1px;height:35px;background:#cfe8c0"></div>
<div class="a" style="left:237px;top:71px;width:1px;height:35px;background:#cfe8c0"></div>
<div class="a" style="left:345px;top:71px;width:1px;height:35px;background:#cfe8c0"></div>
<div class="a" style="left:408px;top:71px;width:1px;height:35px;background:#cfe8c0"></div>
<div class="a" style="left:0px;top:106px;width:426px;height:1px;background:#e3e6ea"></div>
<div class="t" style="left:-1px;width:40px;top:83px;text-align:center;font-size:12.6px;color:#333;">2</div>
<div class="t" style="left:39px;width:90px;top:83px;text-align:center;font-size:12.6px;color:#333;">002</div>
<div class="t" style="left:139px;top:83px;font-size:12.6px;color:#333;">刻录机</div>
<div class="t" style="left:237px;width:108px;top:83px;text-align:center;font-size:12.6px;color:#333;"></div>
<div class="t" style="left:345px;width:63px;top:83px;text-align:center;font-size:12.6px;color:#333;">个</div>
<div class="a" style="left:0px;top:142px;width:426px;height:1px;background:#e3e6ea"></div>
<div class="t" style="left:-1px;width:40px;top:119px;text-align:center;font-size:12.6px;color:#555;">3</div>
<div class="t" style="left:39px;width:90px;top:119px;text-align:center;font-size:12.6px;color:#555;">003</div>
<div class="t" style="left:139px;top:119px;font-size:12.6px;color:#555;">硬盘</div>
<div class="t" style="left:237px;width:108px;top:119px;text-align:center;font-size:12.6px;color:#555;">2t</div>
<div class="t" style="left:345px;width:63px;top:119px;text-align:center;font-size:12.6px;color:#555;">个</div>
<div class="a" style="left:0px;top:178px;width:426px;height:1px;background:#e3e6ea"></div>
<div class="t" style="left:-1px;width:40px;top:155px;text-align:center;font-size:12.6px;color:#555;">4</div>
<div class="t" style="left:39px;width:90px;top:155px;text-align:center;font-size:12.6px;color:#555;">004</div>
<div class="t" style="left:139px;top:155px;font-size:12.6px;color:#555;">显示器</div>
<div class="t" style="left:237px;width:108px;top:155px;text-align:center;font-size:12.6px;color:#555;">2k</div>
<div class="t" style="left:345px;width:63px;top:155px;text-align:center;font-size:12.6px;color:#555;">个</div>
<div class="a" style="left:0px;top:214px;width:426px;height:1px;background:#e3e6ea"></div>
<div class="t" style="left:-1px;width:40px;top:191px;text-align:center;font-size:12.6px;color:#555;">5</div>
<div class="t" style="left:39px;width:90px;top:191px;text-align:center;font-size:12.6px;color:#555;">005</div>
<div class="t" style="left:139px;top:191px;font-size:12.6px;color:#555;">网线</div>
<div class="t" style="left:237px;width:108px;top:191px;text-align:center;font-size:12.6px;color:#555;">超五类</div>
<div class="t" style="left:345px;width:63px;top:191px;text-align:center;font-size:12.6px;color:#555;">米</div>
</div>
<div class="a" style="left:1204px;top:491px;width:8px;height:185px;background:#fff"></div>
<div class="tr" style="left:1204px;top:491px;width:8px;height:184px"></div>
<div class="sb" style="left:1204px;top:491px;width:8px;height:173px"></div>
<div class="tr" style="left:1218px;top:455px;width:9px;height:220px"></div>
<div class="sb" style="left:1218px;top:455px;width:9px;height:189px"></div>
<div class="a" style="left:1240px;top:376px;width:10px;height:312px;background:#eef1f6"></div>
<div class="a" style="left:1258px;top:56px;width:4px;height:632px;background:#fafafa"></div>
<div class="tr" style="left:1250px;top:57px;width:9px;height:621px"></div>
<div class="sb" style="left:1250px;top:57px;width:9px;height:610px"></div>
<div class="tr" style="left:39px;top:678px;width:1211px;height:9px"></div>
<div class="sb" style="left:39px;top:678px;width:1075px;height:9px"></div>
<div class="a" style="left:0px;top:688px;width:1262px;height:5px;background:#d8f2c8"></div>
</body></html>
